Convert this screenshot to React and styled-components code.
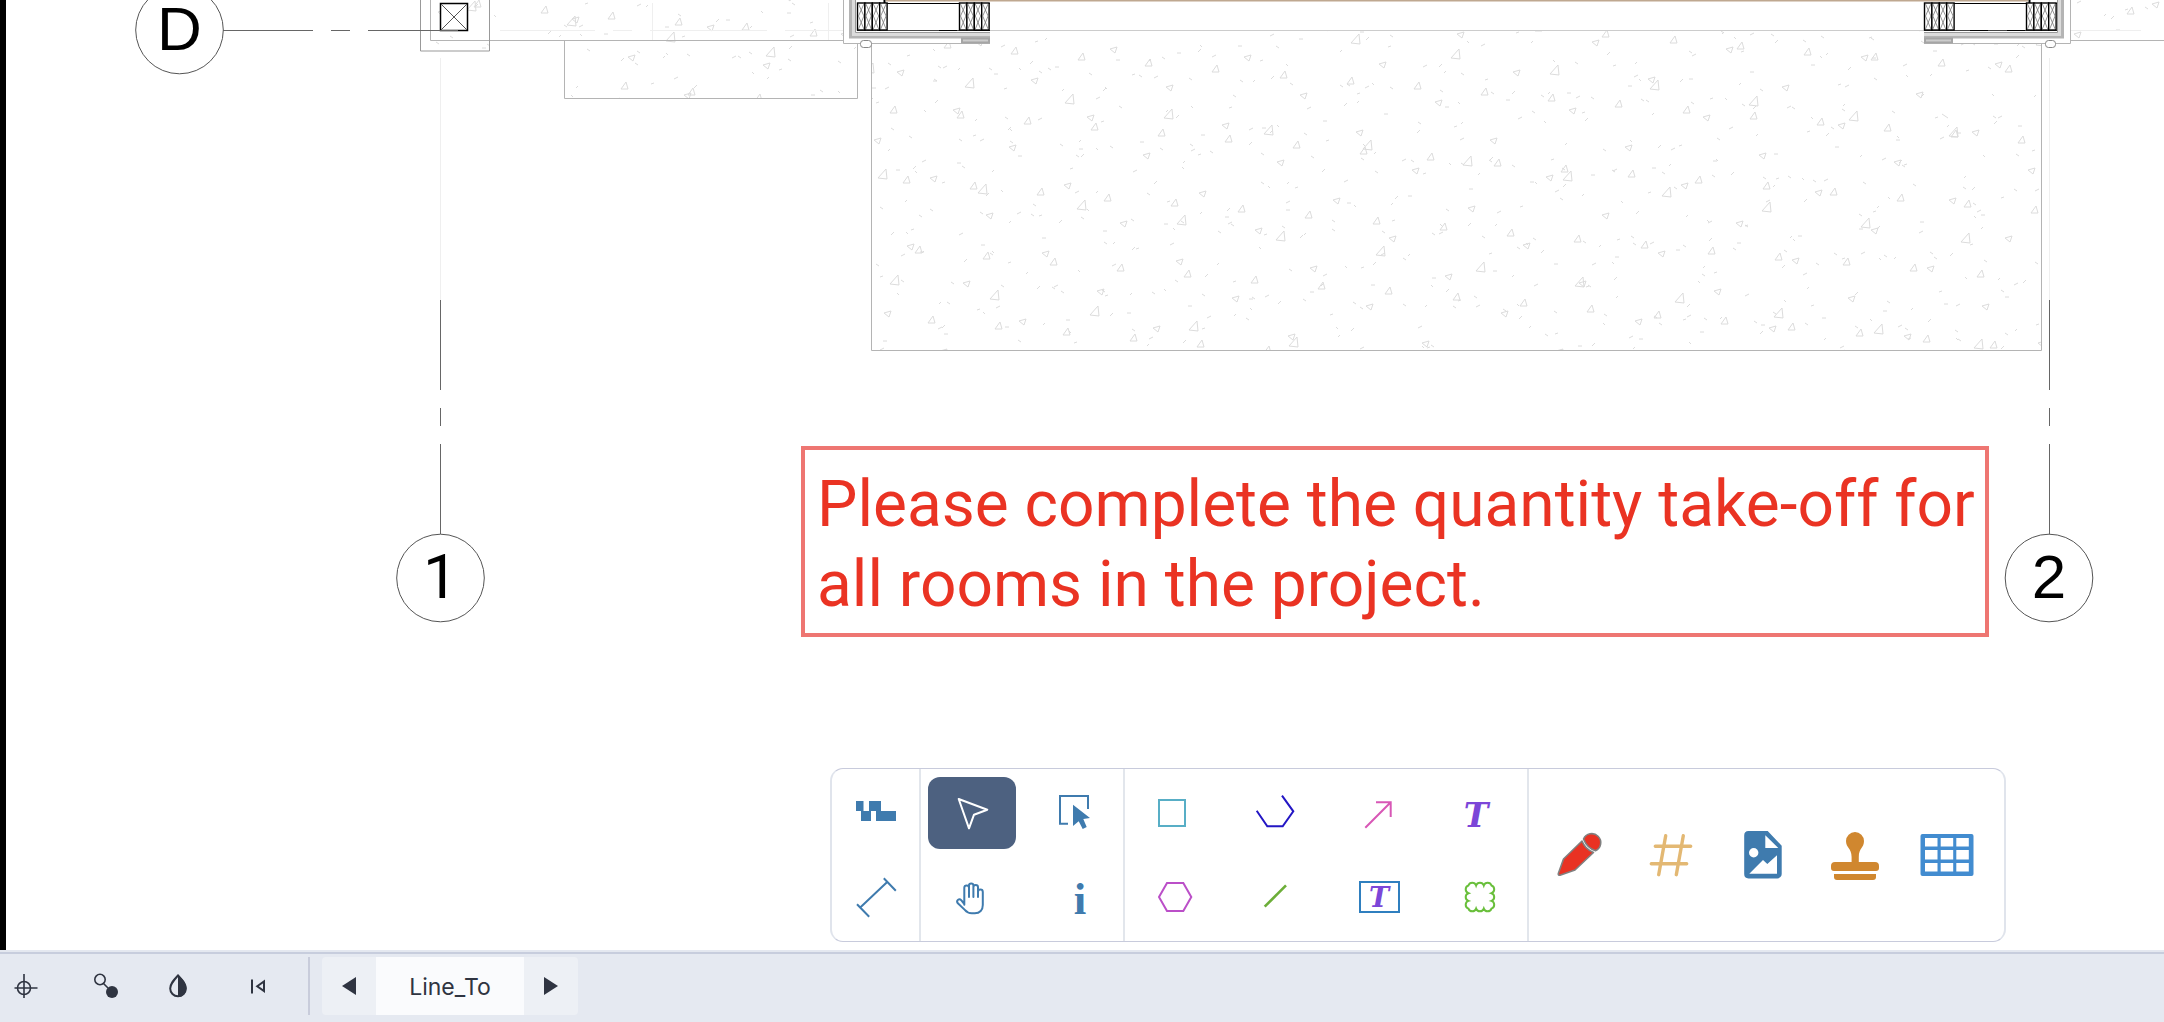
import styled, { createGlobalStyle } from 'styled-components'

const GlobalStyle = createGlobalStyle`
  * {
    box-sizing: border-box;
  }

  body {
    margin: 0;
    background: #fff;
    font-family: Inter, 'Liberation Sans', sans-serif;
  }

  button {
    border: 0;
    padding: 0;
    background: none;
    color: inherit;
    font: inherit;
    cursor: pointer;
  }
`

const Page = styled.div`
  display: flex;
  flex-direction: column;
  height: 100vh;
  overflow: hidden;
`

const Canvas = styled.main`
  position: relative;
  flex: 1;
  min-height: 0;
  overflow: hidden;
  border-left: 6px solid #000;
`

const Sheet = styled.svg`
  position: absolute;
  top: 0;
  left: -6px;
  width: 100vw;
  height: 100%;
  z-index: -1;
`

const Note = styled.div`
  position: absolute;
  left: 795px;
  top: 446px;
  width: 1188px;
  height: 191px;
  padding: 15px 12px;
  border: 4px solid #ee7672;
  color: #ea3323;
  font-family: Roboto, 'Liberation Sans', sans-serif;
  font-size: 64px;
  line-height: 80px;
  white-space: nowrap;
`

const Toolbar = styled.div`
  position: absolute;
  right: 158px;
  bottom: 8px;
  display: flex;
  width: 1176px;
  height: 174px;
  border: 1px solid #c8cbdc;
  border-left: 2px solid #e0e4ec;
  border-right: 2px solid #e0e4ec;
  border-radius: 13px;
  background: #fff;
`

const Section = styled.div`
  display: grid;
  grid-template-columns: repeat(${p => p.$cols}, ${p => p.$size || 88}px);
  gap: 14px 12px;
  align-content: center;
  padding: 2px 7px 0;
  border-right: 2px solid #e2e6ec;
`

const WideSection = styled.div`
  display: flex;
  flex: 1;
  align-items: center;
  gap: 12px;
  padding: 0 10px;
`

const Tool = styled.button`
  display: flex;
  align-items: center;
  justify-content: center;
  height: 72px;
  border-radius: 12px;
  color: ${p => p.$color || '#3f7bae'};
  background: ${p => (p.$active ? '#4d6180' : 'transparent')};
`

const BigTool = styled(Tool)`
  width: 80px;
`

const Icon = styled.svg`
  display: block;
  width: ${p => p.$size || 48}px;
  height: ${p => p.$size || 48}px;
  fill: none;
  stroke: currentColor;
  stroke-width: 2;
  overflow: visible;
`

const Solid = styled(Icon)`
  fill: currentColor;
  stroke: none;
`

const Glyph = styled.text`
  fill: ${p => p.$color || 'currentColor'};
  stroke: none;
  text-anchor: middle;
  font-family: ${p => p.$font};
  font-weight: bold;
  font-style: ${p => (p.$italic ? 'italic' : 'normal')};
  font-size: ${p => p.$size}px;
`

const StatusBar = styled.footer`
  display: flex;
  height: 70px;
  margin-top: 2px;
  padding: 3px 0 7px;
  border-top: 2px solid #c7cddd;
  outline: 2px solid #e4e8f0;
  background: #e5e9f1;
  color: #2f3441;
`

const StatusTools = styled.div`
  display: flex;
  align-items: center;
  gap: 30px;
  padding-right: 26px;
  border-right: 2px solid #c8ccdb;
`

const Pager = styled.div`
  display: flex;
  margin-left: 12px;
  border-radius: 4px;
  overflow: hidden;
  background: #edf0f5;
`

const PagerButton = styled.button`
  display: flex;
  align-items: center;
  justify-content: center;
  width: 54px;
`

const PageTab = styled.button`
  width: 148px;
  padding-top: 2px;
  background: #fafbfd;
  font-size: 23px;
`

const GridText = styled.text`
  font-family: ${p => p.$font || "'Liberation Sans', Arial, sans-serif"};
  font-size: 62px;
  text-anchor: middle;
  fill: #000;
`

// Concrete hatch: every mark repeats over its own slanted lattice
const marks = [
  { d: 'M-5 4L3 -5L4 5Z', o: [970, 83], u: [99.6, 15.5], v: [12.5, 106.2] },
  { d: 'M-4 3L1 -4L3 3Z', o: [1015, 51], u: [67.15, 5.9], v: [12.9, 70.3] },
  { d: 'M-4 -1L3 -3L1 3Z', o: [901, 73], u: [134.4, 7.5], v: [55.8, 37.7] },
  { d: 'M-1 -1L2 1', o: [881, 208], u: [50.2, 2.4], v: [21, 73] },
  { d: 'M-1 -1L1 1', o: [916, 172], u: [86, 19], v: [-9, 61] },
  { d: 'M-2 0L2 0', o: [898, 170], u: [61, -7], v: [24, 82] },
  { d: 'M-2 1L1 0', o: [1006, 88], u: [97, 33], v: [-31, 47] },
  { d: 'M-1 2L2 -1', o: [914, 167], u: [73, 27], v: [-22, 66] },
  { d: 'M-2 1L2 -1', o: [961, 234], u: [58, -21], v: [37, 73] },
  { d: 'M-1 1L1 -1', o: [1080, 141], u: [104, 21], v: [17, 51] },
  { d: 'M-2 -1L1 1', o: [1121, 107], u: [71, 38], v: [-43, 49] },
]

const hatch = marks.map(({ d, o, u, v }) => {
  const det = u[0] * v[1] - u[1] * v[0]
  const [x0, y0, x1, y1] = [420, -10, 2180, 360]
  const corners = [[x0, y0], [x1, y0], [x0, y1], [x1, y1]]
  const is = corners.map(([x, y]) => ((x - o[0]) * v[1] - (y - o[1]) * v[0]) / det)
  const js = corners.map(([x, y]) => ((y - o[1]) * u[0] - (x - o[0]) * u[1]) / det)
  const spots = []
  for (let i = Math.floor(Math.min(...is)); i <= Math.max(...is); i++) {
    for (let j = Math.floor(Math.min(...js)); j <= Math.max(...js); j++) {
      const x = Math.round(o[0] + i * u[0] + j * v[0])
      const y = Math.round(o[1] + i * u[1] + j * v[1])
      if (x > x0 && x < x1 && y > y0 && y < y1) spots.push([x, y])
    }
  }
  return { d, spots }
})

function Studs({ x, count = 4 }) {
  const w = 7.4
  return (
    <g>
      {Array.from({ length: count }, (_, i) => {
        const a = x + i * w
        return (
          <g key={i}>
            <rect x={a} y="3" width={w} height="27" fill="#fff" stroke="#000" strokeWidth="1.4" />
            <path
              d={`M${a + 1} 4L${a + w - 1} 16L${a + 1} 29M${a + w - 1} 4L${a + 1} 16L${a + w - 1} 29`}
              stroke="#777"
              strokeWidth="0.8"
              fill="none"
            />
          </g>
        )
      })}
    </g>
  )
}

function Bubble({ x, y, baseline, label, font }) {
  return (
    <g>
      <circle cx={x} cy={y} r="43.8" fill="#fff" stroke="#555" strokeWidth="1" />
      <GridText x={x} y={baseline} $font={font}>{label}</GridText>
    </g>
  )
}

function FloorPlan() {
  return (
    <Sheet role="img" aria-label="Floor plan">
      <defs>
        <clipPath id="concrete">
          <path d="M421 0H844V40H858V98H565V40H490V51H421ZM872 44H990V30H1924V44H2042V350H872ZM2071 0H2164V40H2071Z" />
        </clipPath>
      </defs>

      <g clipPath="url(#concrete)" fill="none" stroke="#dcdcdc" strokeWidth="1">
        {hatch.map(m => m.spots.map(([x, y]) => (
          <path key={`${m.d}${x},${y}`} d={m.d} transform={`translate(${x} ${y})`} />
        )))}
      </g>

      <g fill="none" stroke="#efefef">
        <path d="M440.5 58V300M2049.5 58V300M652.5 3V40M828.5 3V40M828 30.5H844M2071 30.5H2141M500 30.5H595M613 30.5H632M650 30.5H767M785 30.5H828" />
      </g>

      <g fill="none" stroke="#b4b4b4">
        <path d="M430.5 0V40.5H843M564.5 40V98.5H857.5V44M871.5 44V350.5H2041.5V44M2071 40.5H2164" />
        <path d="M843.5 0V43.5H990M1924 43.5H2070.5V0" />
        <path d="M420.5 0V51H489.5V0" stroke="#999" />
        <path d="M990 30.5H1924" stroke="#ccc" />
      </g>

      {/* wall corners */}
      <g fill="none">
        <path d="M850.5 0V37H990M2062.5 0V37H1924" stroke="#b4b4b4" strokeWidth="3" />
        <path d="M853.5 0V34H990M2059.5 0V34H1924" stroke="#dcdcdc" strokeWidth="3" />
        <path d="M855.5 0V32.5H990M2057.5 0V32.5H1924" stroke="#999" />
        <path d="M857 3.5H990M1924 3.5H2057" stroke="#000" />
        <path d="M857 30.5H990M1924 30.5H2057" stroke="#444" />
        <path d="M884.5 0V3M2029.5 0V3" stroke="#000" strokeWidth="2" />
        <path d="M939 30.5H957M975 30.5H990M1970 30.5H1988M2007 30.5H2025" stroke="#000" />
        <path d="M886 0.5H2028" stroke="#bfa890" strokeWidth="2" />
        <rect x="962" y="38.5" width="27" height="4" fill="#ccc" stroke="#a5a5a5" strokeWidth="2" />
        <rect x="1925" y="38.5" width="27" height="4" fill="#ccc" stroke="#a5a5a5" strokeWidth="2" />
        <rect x="860.5" y="40.5" width="11" height="7" rx="3" fill="#fff" stroke="#888" />
        <rect x="2045.5" y="40.5" width="10" height="7" rx="3" fill="#fff" stroke="#888" />
      </g>
      <Studs x={857.5} />
      <Studs x={959.5} />
      <Studs x={1924.5} />
      <Studs x={2026.5} />

      {/* post */}
      <rect x="440.5" y="3.5" width="27" height="27" fill="#fff" stroke="#000" strokeWidth="1.5" />
      <path d="M441 4L467 30M467 4L441 30" stroke="#555" />

      <g fill="none" stroke="#666">
        <path d="M223 30.5H313M331 30.5H350M368 30.5H458" />
        <path d="M440.5 300V390M440.5 408V426M440.5 444V534" />
        <path d="M2049.5 300V390M2049.5 408V426M2049.5 444V534" />
      </g>
      <Bubble x={179.5} y={30} baseline={50} label="D" />
      <Bubble x={440.5} y={578} baseline={598} label="1" font="Roboto, sans-serif" />
      <Bubble x={2049} y={578} baseline={598} label="2" />
    </Sheet>
  )
}

const slab = "'DejaVu Serif', serif"

function MarkupToolbar() {
  return (
    <Toolbar role="toolbar" aria-label="Markup tools">
      <Section $cols={1} $size={73}>
        <Tool aria-label="Wall">
          <Solid viewBox="0 0 48 48">
            <path d="M4 12H11.5V22H17V12H29V22H44V32H24V22H19V32H9V22H4Z" />
          </Solid>
        </Tool>
        <Tool aria-label="Dimension">
          <Icon viewBox="0 0 48 48">
            <path d="M8.5 32.3L35.2 7M5 29.3L17.2 41.7M31.8 3.3L43.8 15.7" />
          </Icon>
        </Tool>
      </Section>

      <Section $cols={2}>
        <Tool aria-label="Select" $active $color="#fff">
          <Icon viewBox="0 0 48 48">
            <path d="M10.7 10L39.3 20.7L26 25.7L21 39.3Z" strokeLinejoin="round" />
          </Icon>
        </Tool>
        <Tool aria-label="Area select">
          <Icon viewBox="0 0 48 48">
            <path d="M20 34.7H12V7H40V20" />
            <path d="M25 15.7L42 29L35.3 30L38.7 38L34.7 40L30.7 32.3L25 37Z" fill="currentColor" stroke="none" />
          </Icon>
        </Tool>
        <Tool aria-label="Pan">
          <Icon viewBox="0 0 48 48" strokeLinecap="round" strokeLinejoin="round">
            <path d="M16.3 29.7V12.8a2.3 2.3 0 0 1 4.7 0V22M21 22V10.6a2.2 2.2 0 0 1 4.4 0V22M25.4 12.3a2.3 2.3 0 0 1 4.6 0V22M30 17a2.4 2.4 0 0 1 4.8 0V30c0 5-3 8.3-8 8.3h-3c-3 0-5-1-7-3.4L9.6 28c-1.6-2.8 1.6-5 3.8-2.6l2.9 3.6" />
          </Icon>
        </Tool>
        <Tool aria-label="Info">
          <Icon viewBox="0 0 48 48">
            <Glyph x="32" y="39" $size={45} $font="'Liberation Serif', serif">i</Glyph>
          </Icon>
        </Tool>
      </Section>

      <Section $cols={4}>
        <Tool aria-label="Rectangle" $color="#58aec6">
          <Icon viewBox="0 0 48 48"><rect x="7" y="11" width="26" height="26" /></Icon>
        </Tool>
        <Tool aria-label="Polyline" $color="#2316c4">
          <Icon viewBox="0 0 48 48"><path d="M4.7 21.7L15.3 37.3H30.7L41.3 22.3L30 6.7" /></Icon>
        </Tool>
        <Tool aria-label="Arrow" $color="#d857b6">
          <Icon viewBox="0 0 48 48"><path d="M13.3 38.7L38.7 13.3M24 13.3H38.7V28" /></Icon>
        </Tool>
        <Tool aria-label="Text" $color="#7c46d8">
          <Icon viewBox="0 0 48 48">
            <Glyph x="24" y="38" $size={33} $font={slab} $italic>T</Glyph>
          </Icon>
        </Tool>
        <Tool aria-label="Polygon" $color="#bb4fc8">
          <Icon viewBox="0 0 48 48"><path d="M7 22L15 8H31.3L39.3 22L31.3 36H15Z" /></Icon>
        </Tool>
        <Tool aria-label="Line" $color="#6cae38">
          <Icon viewBox="0 0 48 48"><path d="M12.7 31.7L34 10.3" strokeWidth="2.6" /></Icon>
        </Tool>
        <Tool aria-label="Text box" $color="#2f7fbf">
          <Icon viewBox="0 0 48 48">
            <rect x="8" y="7" width="39" height="30" />
            <Glyph x="27" y="32" $size={27} $font={slab} $color="#7c46d8" $italic>T</Glyph>
          </Icon>
        </Tool>
        <Tool aria-label="Cloud" $color="#69bf3b">
          <Icon viewBox="0 0 48 48">
            <path d="M16.4 10.5a4.1 4.1 0 0 1 7.7 0a4.1 4.1 0 0 1 7.7 0a4.1 4.1 0 0 1 7.7 0a4.1 4.1 0 0 1 0 7.7a4.1 4.1 0 0 1 0 7.7a4.1 4.1 0 0 1 0 7.7a4.1 4.1 0 0 1 -7.7 0a4.1 4.1 0 0 1 -7.7 0a4.1 4.1 0 0 1 -7.7 0a4.1 4.1 0 0 1 0 -7.7a4.1 4.1 0 0 1 0 -7.7a4.1 4.1 0 0 1 0 -7.7Z" />
          </Icon>
        </Tool>
      </Section>

      <WideSection>
        <BigTool aria-label="Highlighter" $color="#808080">
          <Icon viewBox="0 0 56 56" $size={56}>
            <g fill="#e93223" strokeWidth="1.6" strokeLinejoin="round">
              <path d="M7.3 46.5L12.5 32L31 14Q34 22 42.5 25.5L24 43L9 48.3Q7 48.5 7.3 46.5Z" />
              <path d="M32.5 12A9 9 0 1 1 44.5 23.8Q36 21 32.5 12Z" />
            </g>
          </Icon>
        </BigTool>
        <BigTool aria-label="Count" $color="#e3b873">
          <Icon viewBox="0 0 56 56" $size={56}>
            <path d="M22.7 8.7L15.7 47.7M40.3 8.7L33.3 47.7M12.3 19.3H47.7M8.3 36.7H43.7" strokeWidth="3.4" strokeLinecap="round" />
          </Icon>
        </BigTool>
        <BigTool aria-label="Image">
          <Solid viewBox="0 0 56 56" $size={56}>
            <path d="M13.5 4H32.7L46.7 18.7V47a4.4 4.4 0 0 1-4.4 4.4H13.5A4.4 4.4 0 0 1 9.2 47V8.4A4.4 4.4 0 0 1 13.5 4Z" />
            <path d="M30.3 8.3V21H43.3ZM14.3 46.7L28 33L32.3 37L42 28.3V46.7Z" fill="#fff" />
            <circle cx="18.7" cy="25.7" r="4.7" fill="#fff" />
          </Solid>
        </BigTool>
        <BigTool aria-label="Stamp" $color="#d0872f">
          <Solid viewBox="0 0 56 56" $size={56}>
            <path d="M28 5a9 9 0 0 1 9 9C37 21 31.8 21 31.8 30V35H48a4 4 0 0 1 4 4V41a3 3 0 0 1-3 3H7a3 3 0 0 1-3-3V39a4 4 0 0 1 4-4H24.6V30C24.6 21 19 21 19 14a9 9 0 0 1 9-9Z" />
            <path d="M7 47H49V50a3 3 0 0 1-3 3H10a3 3 0 0 1-3-3Z" />
          </Solid>
        </BigTool>
        <BigTool aria-label="Table" $color="#428cd0">
          <Solid viewBox="0 0 56 56" $size={56}>
            <rect x="1.5" y="7" width="53" height="42" rx="2" />
            {[11, 23, 36].map(y => [6, 21.7, 37.3].map(x => (
              <rect key={`${x},${y}`} x={x} y={y} width="12.5" height={y === 23 ? 9.5 : 8.5} fill="#fff" />
            )))}
          </Solid>
        </BigTool>
      </WideSection>
    </Toolbar>
  )
}

function App() {
  return (
    <Page>
      <GlobalStyle />
      <Canvas>
        <FloorPlan />
        <Note>
          Please complete the quantity take-off for
          <br />
          all rooms in the project.
        </Note>
        <MarkupToolbar />
      </Canvas>
      <StatusBar>
        <StatusTools>
          <button aria-label="Snap to point">
            <Icon viewBox="0 0 48 48">
              <circle cx="24" cy="26" r="6.5" strokeWidth="1.6" />
              <path d="M24 12V36M14.5 26H37.5" strokeWidth="1.6" />
            </Icon>
          </button>
          <button aria-label="Snap to markup">
            <Icon viewBox="0 0 48 48">
              <circle cx="22" cy="17.5" r="5.2" strokeWidth="1.6" />
              <path d="M25 21L30 26" strokeWidth="1.6" />
              <circle cx="34" cy="30" r="6" fill="currentColor" stroke="none" />
            </Icon>
          </button>
          <button aria-label="Contrast">
            <Icon viewBox="0 0 48 48">
              <path d="M22 13.5C17.5 18.5 14.2 22 14.2 26.5a7.8 7.8 0 0 0 15.6 0C29.8 22 26.5 18.5 22 13.5Z" />
              <path d="M22 12.5V35A8.5 8.5 0 0 0 30.5 26C30.5 21 26 17 22 12.5Z" fill="currentColor" stroke="none" />
            </Icon>
          </button>
          <button aria-label="First page">
            <Icon viewBox="0 0 48 48">
              <path d="M18 17.5V31.5M23.2 24.2L30 19.4V29Z" />
            </Icon>
          </button>
        </StatusTools>
        <Pager>
          <PagerButton aria-label="Previous page">
            <Solid viewBox="0 0 20 20" $size={20}><path d="M3 10L17 1V19Z" /></Solid>
          </PagerButton>
          <PageTab>Line_To</PageTab>
          <PagerButton aria-label="Next page">
            <Solid viewBox="0 0 20 20" $size={20}><path d="M17 10L3 1V19Z" /></Solid>
          </PagerButton>
        </Pager>
      </StatusBar>
    </Page>
  )
}

export default App
